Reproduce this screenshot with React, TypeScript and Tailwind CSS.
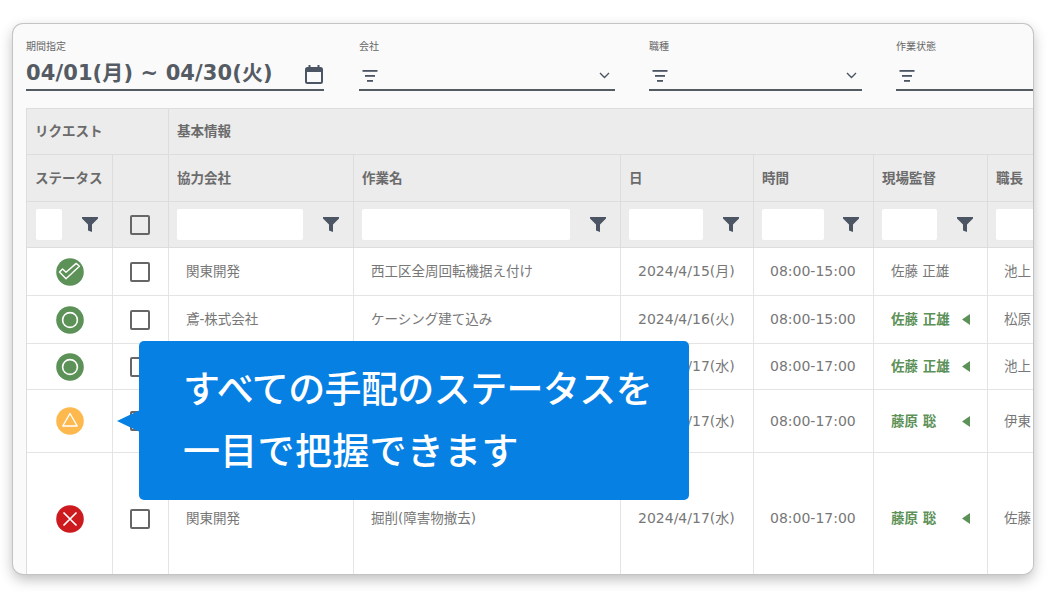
const COLS = "grid grid-cols-[86px_56px_185px_267px_133px_120px_114px_45px]";
const SANS = "font-['DejaVu_Sans','Noto_Sans_CJK_JP',sans-serif]";

function FilterLines() {
  return (
    <svg width="16" height="12" viewBox="0 0 16 12" className="text-[#4b5563]" fill="currentColor">
      <rect x="0.5" y="0" width="15" height="1.8" />
      <rect x="3" y="5" width="10" height="1.8" />
      <rect x="5" y="10" width="6" height="1.8" />
    </svg>
  );
}

function Chevron() {
  return (
    <svg width="11" height="7" viewBox="0 0 11 7" fill="none" stroke="#4b5563" strokeWidth="1.4">
      <path d="M1 1l4.5 4.5L10 1" />
    </svg>
  );
}

function Funnel() {
  return (
    <svg width="16" height="15" viewBox="0 0 16 15" className="shrink-0" fill="#4b5563">
      <path d="M0 0h16v1.6L10 7.5V15l-4-1.5V7.5L0 1.6z" />
    </svg>
  );
}

function Checkbox() {
  return <div className="mr-[1px] h-5 w-5 rounded-[2px] border-2 border-[#666666]" />;
}

function FilterField({ label, className, chevron = true }: { label: string; className: string; chevron?: boolean }) {
  return (
    <div className={className}>
      <div className="text-[10px] leading-[14px] text-[#666666]">{label}</div>
      <div className="mt-[10px] flex h-[27px] items-center justify-between border-b-2 border-[#555b63] pb-[2px] pl-[3px] pr-[5px]">
        <FilterLines />
        {chevron && <Chevron />}
      </div>
    </div>
  );
}

function FilterCell({ input, pad }: { input: string; pad: string }) {
  return (
    <div className={`flex h-[46px] items-center justify-between border-r border-b border-[#dddddd] ${pad} pr-[14px]`}>
      <div className={`${input} h-[31px] rounded-[2px] bg-white`} />
      <Funnel />
    </div>
  );
}

function Head({ children, className = "" }: { children?: React.ReactNode; className?: string }) {
  return (
    <div className={`flex h-[47px] items-center border-r border-b border-[#dddddd] pl-[8px] text-[13.5px] font-bold text-[#6b6b6b] ${className}`}>
      {children}
    </div>
  );
}

type Status = "done" | "ok" | "warn" | "ng";

function StatusIcon({ status }: { status: Status }) {
  const color = status === "warn" ? "#fdb94e" : status === "ng" ? "#cc1a1f" : "#5c9157";
  return (
    <svg width="28" height="28" viewBox="0 0 28 28" fill="none" stroke="#ffffff" strokeWidth="1.4">
      <circle cx="14" cy="14" r="13.8" fill={color} stroke="none" />
      {status === "done" && (
        <path d="M3.5 14 6.6 11l3.4 3.2L20.2 5.4l3.2 2.8L10 20.8z" strokeLinejoin="round" />
      )}
      {status === "ok" && <circle cx="14" cy="14" r="7.4" strokeWidth="1.6" />}
      {status === "warn" && <path d="M14 6.5 21.2 19H6.8z" strokeLinejoin="round" />}
      {status === "ng" && <path d="M7.5 7.5l13 13M20.5 7.5l-13 13" strokeWidth="1.7" />}
    </svg>
  );
}

const rows: {
  h: string;
  status: Status;
  company: string;
  work: string;
  date: string;
  time: string;
  boss: string;
  green: boolean;
  chief: string;
}[] = [
  { h: "h-[48px]", status: "done", company: "関東開発", work: "西工区全周回転機据え付け", date: "2024/4/15(月)", time: "08:00-15:00", boss: "佐藤 正雄", green: false, chief: "池上" },
  { h: "h-[48px]", status: "ok", company: "鳶-株式会社", work: "ケーシング建て込み", date: "2024/4/16(火)", time: "08:00-15:00", boss: "佐藤 正雄", green: true, chief: "松原" },
  { h: "h-[46px]", status: "ok", company: "", work: "", date: "2024/4/17(水)", time: "08:00-17:00", boss: "佐藤 正雄", green: true, chief: "池上" },
  { h: "h-[63px]", status: "warn", company: "", work: "", date: "2024/4/17(水)", time: "08:00-17:00", boss: "藤原 聡", green: true, chief: "伊東" },
  { h: "h-[132px]", status: "ng", company: "関東開発", work: "掘削(障害物撤去)", date: "2024/4/17(水)", time: "08:00-17:00", boss: "藤原 聡", green: true, chief: "佐藤" },
];

export default function App() {
  const cell = "flex items-center border-r border-b border-[#e4e4e4] text-[13.5px]";
  return (
    <div className={`h-[594px] w-[1056px] bg-white pl-[13px] pt-[24px] ${SANS}`}>
      <div className="relative h-[550px] w-[1020px] overflow-hidden rounded-[10px] bg-[#fafafa] shadow-[0_0_0_1px_#c4c4c4,0_5px_14px_rgba(0,0,0,0.28)]">
        <div className="flex h-[84px] pl-[13px] pt-[16px]">
          <div className="w-[298px]">
            <div className="text-[10px] leading-[14px] text-[#666666]">期間指定</div>
            <div className="mt-[2px] flex h-[35px] items-center justify-between border-b-2 border-[#555b63] pr-[1px] text-[21px] font-bold leading-[30px] tracking-[0.1px] text-[#555b63]">
              <span className="mt-[1px]">04/01(月) ~ 04/30(火)</span>
              <svg width="18" height="19" viewBox="0 0 18 19" fill="none" stroke="#4b5563" strokeWidth="2" className="mt-[3px]">
                <rect x="1" y="3" width="16" height="15" rx="1.5" />
                <path d="M1 5.5h16" strokeWidth="3" />
                <path d="M4.5 0v3M13.5 0v3" />
              </svg>
            </div>
          </div>
          <FilterField label="会社" className="ml-[35px] w-[256px]" />
          <FilterField label="職種" className="ml-[34px] w-[213px]" />
          <FilterField label="作業状態" className="ml-[34px] w-[137px]" chevron={false} />
        </div>

        <div className="ml-[13px] border-t border-l border-[#dddddd] bg-[#ececec]">
          <div className="grid h-[46px] grid-cols-[142px_1fr] border-b border-[#dddddd] text-[13.5px] font-bold text-[#6b6b6b]">
            <div className="flex items-center border-r border-[#dddddd] pl-[8px]">リクエスト</div>
            <div className="flex items-center pl-[8px]">基本情報</div>
          </div>
          <div className={COLS}>
            <Head>ステータス</Head>
            <Head />
            <Head>協力会社</Head>
            <Head>作業名</Head>
            <Head>日</Head>
            <Head>時間</Head>
            <Head>現場監督</Head>
            <Head className="border-r-0">職長</Head>
          </div>
          <div className={COLS}>
            <FilterCell input="w-[26px]" pad="pl-[9px]" />
            <div className="flex h-[46px] items-center justify-center border-r border-b border-[#dddddd]">
              <Checkbox />
            </div>
            <FilterCell input="w-[126px]" pad="pl-[8px]" />
            <FilterCell input="w-[208px]" pad="pl-[8px]" />
            <FilterCell input="w-[74px]" pad="pl-[8px]" />
            <FilterCell input="w-[62px]" pad="pl-[8px]" />
            <FilterCell input="w-[55px]" pad="pl-[8px]" />
            <div className="flex h-[46px] items-center border-b border-[#dddddd] pl-[8px]">
              <div className="h-[31px] w-full rounded-l-[2px] bg-white" />
            </div>
          </div>
        </div>

        <div className="ml-[13px] border-l border-[#dddddd] bg-white">
          {rows.map((r, i) => (
            <div key={i} className={`${COLS} ${r.h}`}>
              <div className={`${cell} justify-center`}>
                <StatusIcon status={r.status} />
              </div>
              <div className={`${cell} justify-center`}>
                <Checkbox />
              </div>
              <div className={`${cell} pl-[17px] text-[#777777]`}>{r.company}</div>
              <div className={`${cell} pl-[17px] text-[#777777]`}>{r.work}</div>
              <div className={`${cell} pl-[17px] text-[14px] text-[#777777]`}>{r.date}</div>
              <div className={`${cell} pl-[16px] text-[14px] text-[#777777]`}>{r.time}</div>
              <div className={`${cell} justify-between pl-[17px] pr-[17px] ${r.green ? "font-bold text-[#5c9157]" : "text-[#777777]"}`}>
                <span>{r.boss}</span>
                {r.green && (
                  <svg width="8" height="11" viewBox="0 0 8 11" fill="#5c9157">
                    <path d="M8 0v11L0 5.5z" />
                  </svg>
                )}
              </div>
              <div className={`${cell} border-r-0 pl-[16px] whitespace-nowrap text-[#777777]`}>{r.chief}</div>
            </div>
          ))}
        </div>

        <div className="absolute left-[126px] top-[317px] h-[159px] w-[550px] rounded-[5px] bg-[#0780e4] pl-[44px] pt-[15px] font-['Noto_Sans_CJK_JP',sans-serif] text-[37px] font-medium leading-[62px] text-white">
          <div className="whitespace-nowrap tracking-[-0.6px]">すべての手配のステータスを</div>
          <div className="whitespace-nowrap tracking-[0.3px]">一目で把握できます</div>
          <svg width="23" height="22" viewBox="0 0 23 22" fill="#0780e4" className="absolute left-[-22px] top-[69px]">
            <path d="M23 0v22L0 11z" />
          </svg>
        </div>
      </div>
    </div>
  );
}
